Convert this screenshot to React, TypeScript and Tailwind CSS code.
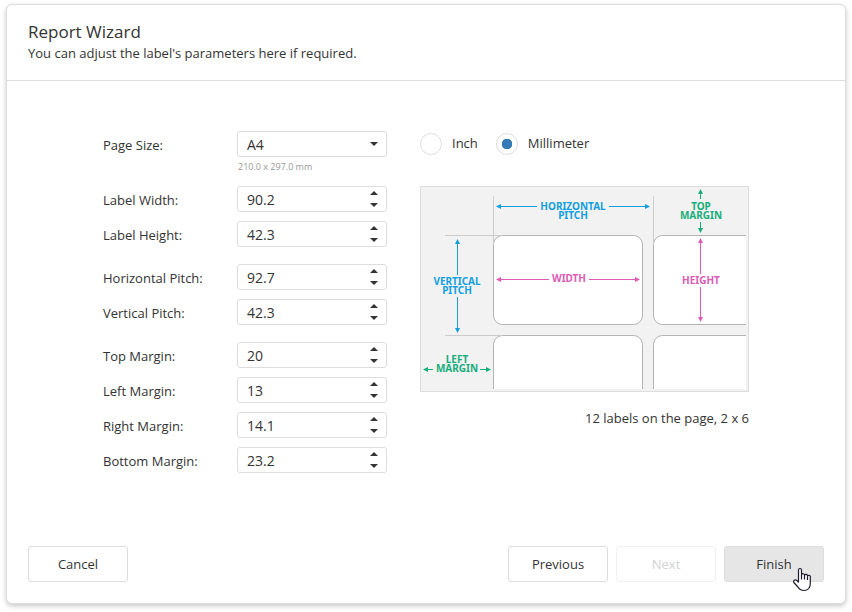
import { useState } from "react";

type Field = { id: string; label: string; value: number };

const groups: Field[][] = [
  [
    { id: "label-width", label: "Label Width:", value: 90.2 },
    { id: "label-height", label: "Label Height:", value: 42.3 },
  ],
  [
    { id: "horizontal-pitch", label: "Horizontal Pitch:", value: 92.7 },
    { id: "vertical-pitch", label: "Vertical Pitch:", value: 42.3 },
  ],
  [
    { id: "top-margin", label: "Top Margin:", value: 20 },
    { id: "left-margin", label: "Left Margin:", value: 13 },
    { id: "right-margin", label: "Right Margin:", value: 14.1 },
    { id: "bottom-margin", label: "Bottom Margin:", value: 23.2 },
  ],
];

function SpinField({ id, label, value }: Field) {
  const [current, setCurrent] = useState(String(value));
  const step = (delta: number) =>
    setCurrent((v) => String(Math.round((Number(v) + delta) * 10) / 10));

  return (
    <div className="flex items-center">
      <label htmlFor={id} className="w-[134px] shrink-0 pt-0.5">
        {label}
      </label>
      <div className="flex h-[26px] w-[150px] rounded-[3px] border border-[#ddd] bg-white">
        <input
          id={id}
          type="text"
          inputMode="decimal"
          value={current}
          onChange={(e) => setCurrent(e.target.value)}
          className="min-w-0 flex-1 bg-transparent pt-0.5 pl-[9px] text-[14px] outline-none"
        />
        <div className="flex w-6 flex-col">
          <button
            type="button"
            aria-label={"Increase " + label}
            onClick={() => step(0.1)}
            className="flex flex-1 items-start justify-center pt-1"
          >
            <svg width="8" height="4" viewBox="0 0 8 4" fill="#333">
              <path d="M4 0 8 4H0Z" />
            </svg>
          </button>
          <button
            type="button"
            aria-label={"Decrease " + label}
            onClick={() => step(-0.1)}
            className="flex flex-1 items-end justify-center pb-1"
          >
            <svg width="8" height="4" viewBox="0 0 8 4" fill="#333">
              <path d="M0 0H8L4 4Z" />
            </svg>
          </button>
        </div>
      </div>
    </div>
  );
}

function Radio({ label, checked, onSelect }: { label: string; checked: boolean; onSelect: () => void }) {
  return (
    <label className="flex items-center gap-2.5">
      <input
        type="radio"
        name="unit"
        checked={checked}
        onChange={onSelect}
        className="size-[22px] appearance-none rounded-full border border-[#ddd] bg-white checked:bg-[radial-gradient(circle,#337ab7_5px,transparent_5.5px)]"
      />
      <span className="pb-0.5">{label}</span>
    </label>
  );
}

const BLUE = "#129fe0";
const PINK = "#dd5bb4";
const GREEN = "#17ad7b";

type ArrowProps = { from: [number, number]; to: [number, number]; color: string };

function Arrow({ from: [x1, y1], to: [x2, y2], color }: ArrowProps) {
  const dx = Math.sign(x2 - x1);
  const dy = Math.sign(y2 - y1);
  const bx = x2 - dx * 5;
  const by = y2 - dy * 5;
  return (
    <g>
      <path d={`M${x1} ${y1}L${bx} ${by}`} stroke={color} />
      <path
        d={`M${x2} ${y2}L${bx + dy * 2.5} ${by + dx * 2.5}L${bx - dy * 2.5} ${by - dx * 2.5}Z`}
        fill={color}
      />
    </g>
  );
}

function LabelDiagram() {
  return (
    <svg
      width="329"
      height="206"
      viewBox="0 0 329 206"
      fill="none"
      role="img"
      aria-label="Label layout"
      className="font-['Noto_Sans',sans-serif] text-[10px] font-bold"
    >
      <rect x="0.5" y="0.5" width="328" height="205" fill="#f2f2f2" stroke="#ddd" />
      <g fill="#fff" stroke="#b3b3b3">
        <rect x="73.5" y="49.5" width="149" height="89" rx="9" />
        <path d="M326 49.5H242.500A9 9 0 0 0 233.500 58.500V129.500A9 9 0 0 0 242.500 138.500H326" />
        <path d="M73.500 203V158.500A9 9 0 0 1 82.500 149.500H213.500A9 9 0 0 1 222.500 158.500V203" />
        <path d="M233.500 203V158.500A9 9 0 0 1 242.500 149.500H326V203" stroke="none" />
        <path d="M233.500 203V158.500A9 9 0 0 1 242.500 149.500H326" fill="none" />
      </g>
      <path d="M73.500 10V59M233.500 10V59M25 49.500H83M25 149.500H83" stroke="#ccc" />

      <Arrow from={[117, 20.5]} to={[76, 20.5]} color={BLUE} />
      <Arrow from={[189, 20.5]} to={[230, 20.5]} color={BLUE} />
      <Arrow from={[37.5, 89]} to={[37.5, 53]} color={BLUE} />
      <Arrow from={[37.5, 111]} to={[37.5, 147]} color={BLUE} />
      <Arrow from={[129, 93.5]} to={[76, 93.5]} color={PINK} />
      <Arrow from={[169, 93.5]} to={[220, 93.5]} color={PINK} />
      <Arrow from={[280.5, 88]} to={[280.5, 52]} color={PINK} />
      <Arrow from={[280.5, 101]} to={[280.5, 136]} color={PINK} />
      <Arrow from={[280.5, 13]} to={[280.5, 3]} color={GREEN} />
      <Arrow from={[280.5, 36]} to={[280.5, 47]} color={GREEN} />
      <Arrow from={[13, 183.5]} to={[3, 183.5]} color={GREEN} />
      <Arrow from={[60, 183.5]} to={[71, 183.5]} color={GREEN} />

      <g textAnchor="middle">
        <g fill={BLUE}>
          <text x="153" y="24">HORIZONTAL</text>
          <text x="153" y="33">PITCH</text>
          <text x="37" y="99">VERTICAL</text>
          <text x="37" y="108">PITCH</text>
        </g>
        <g fill={PINK}>
          <text x="149" y="96">WIDTH</text>
          <text x="281" y="98">HEIGHT</text>
        </g>
        <g fill={GREEN}>
          <text x="281" y="24">TOP</text>
          <text x="281" y="33">MARGIN</text>
          <text x="37" y="177">LEFT</text>
          <text x="37" y="186">MARGIN</text>
        </g>
      </g>
    </svg>
  );
}

function HandPointer() {
  return (
    <svg
      width="20"
      height="25"
      viewBox="0 0 20 25"
      className="pointer-events-none absolute top-5 left-[67px]"
      aria-hidden="true"
    >
      <path
        d="M6.500 15V3A1.500 1.500 0 0 1 9.500 3V8A1.500 1.500 0 0 1 12.500 8.500A1.500 1.500 0 0 1 15.500 9.300A1.400 1.400 0 0 1 18.300 10.500V16.500C18.300 21 15.500 23.500 12 23.500C9 23.500 7 22 5.500 19.500L1.800 15.500C1 13.500 3 12.300 4.500 13.300Z"
        fill="#fff"
        stroke="#1b1b2b"
        strokeWidth="1.200"
        strokeLinejoin="round"
      />
      <path d="M9.500 8V12.500M12.500 8.700V12.500M15.500 9.700V13" stroke="#1b1b2b" strokeWidth="1.200" />
    </svg>
  );
}

const buttonBase = "h-9 w-[100px] rounded-[3px] border";

export default function App() {
  const [unit, setUnit] = useState("Millimeter");

  return (
    <div className="flex min-h-screen bg-white px-1.5 pt-1 pb-2 font-['Open_Sans','Noto_Sans',sans-serif] text-[13px] leading-5 text-[#333]">
      <main className="flex flex-1 flex-col rounded-md border border-[#ddd] bg-white shadow-[0_2px_5px_rgba(0,0,0,0.22)]">
        <header className="border-b border-[#ddd] px-[21px] pt-4 pb-[17px]">
          <h1 className="text-[17px] leading-[22px]">Report Wizard</h1>
          <p>You can adjust the label's parameters here if required.</p>
        </header>

        <form className="mx-auto flex w-full max-w-[646px] flex-1 items-start justify-between pt-[50px]">
          <div className="flex flex-col gap-[17px]">
            <div className="flex flex-col gap-[9px]">
              <div className="flex items-start">
                <label htmlFor="page-size" className="w-[134px] shrink-0 pt-1">
                  Page Size:
                </label>
                <div className="w-[150px]">
                  <div className="relative">
                    <select
                      id="page-size"
                      className="block h-[26px] w-full appearance-none rounded-[3px] border border-[#ddd] bg-white pt-0.5 pl-[9px] text-[14px] outline-none"
                    >
                      <option>A4</option>
                      <option>Letter</option>
                    </select>
                    <svg
                      width="8"
                      height="4"
                      viewBox="0 0 8 4"
                      fill="#333"
                      className="pointer-events-none absolute top-[11px] right-[9px]"
                    >
                      <path d="M0 0H8L4 4Z" />
                    </svg>
                  </div>
                  <p className="pl-px text-[9px] text-[#999]">210.0 x 297.0 mm</p>
                </div>
              </div>
              {groups[0].map((f) => (
                <SpinField key={f.id} {...f} />
              ))}
            </div>
            {groups.slice(1).map((group) => (
              <div key={group[0].id} className="flex flex-col gap-[9px]">
                {group.map((f) => (
                  <SpinField key={f.id} {...f} />
                ))}
              </div>
            ))}
          </div>

          <div className="w-[329px]">
            <div className="flex gap-[18px] pt-0.5">
              {["Inch", "Millimeter"].map((u) => (
                <Radio key={u} label={u} checked={unit === u} onSelect={() => setUnit(u)} />
              ))}
            </div>
            <div className="pt-[31px]">
              <LabelDiagram />
            </div>
            <p className="pt-4 text-right">12 labels on the page, 2 x 6</p>
          </div>
        </form>

        <footer className="flex gap-2 px-[21px] pb-[21px]">
          <button type="button" className={`${buttonBase} mr-auto border-[#ddd]`}>
            Cancel
          </button>
          <button type="button" className={`${buttonBase} border-[#ddd]`}>
            Previous
          </button>
          <button type="button" disabled className={`${buttonBase} border-[#f0f0f0] text-[#d2d2d2]`}>
            Next
          </button>
          <button type="button" className={`${buttonBase} relative border-[#ddd] bg-[#e6e6e6]`}>
            Finish
            <HandPointer />
          </button>
        </footer>
      </main>
    </div>
  );
}
